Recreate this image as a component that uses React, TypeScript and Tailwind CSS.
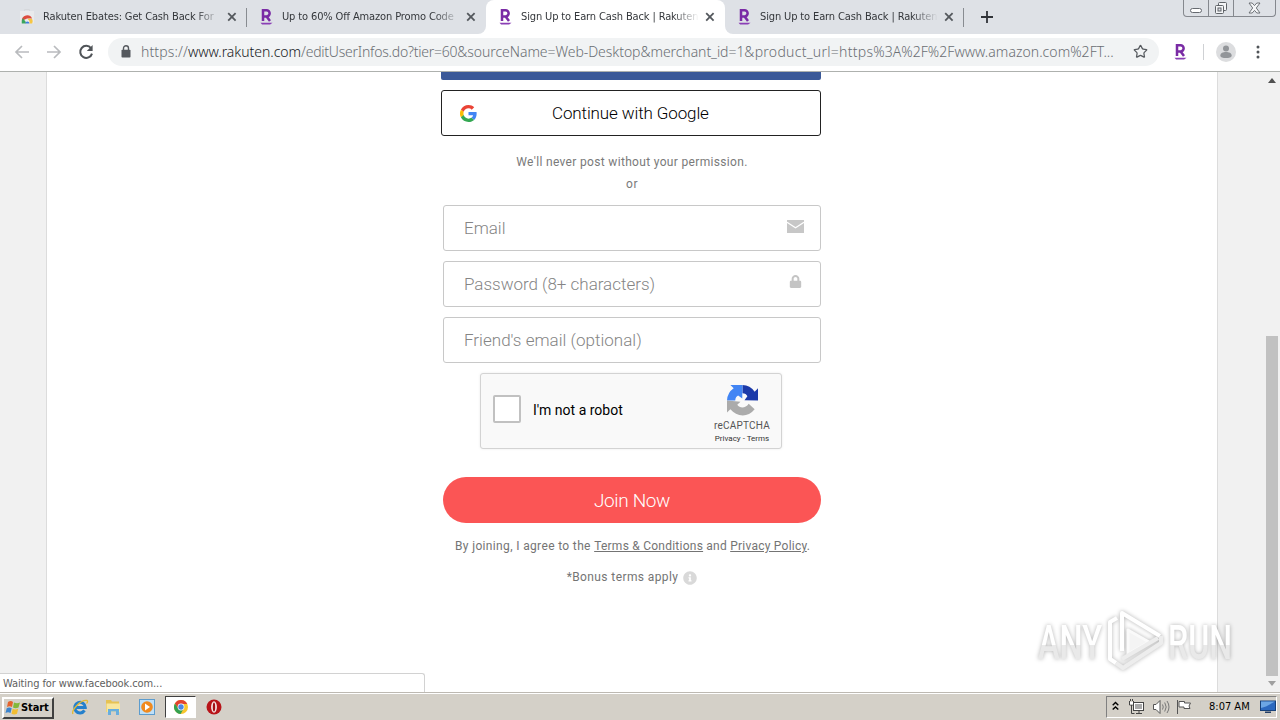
import type { ReactNode } from "react";
import { FaLock, FaInfoCircle } from "react-icons/fa";
import { Star } from "lucide-react";

interface Tab {
  title: string;
  icon: "store" | "rakuten";
  active?: boolean;
}

const tabs: Tab[] = [
  { title: "Rakuten Ebates: Get Cash Back For", icon: "store" },
  { title: "Up to 60% Off Amazon Promo Code", icon: "rakuten" },
  { title: "Sign Up to Earn Cash Back | Rakuten", icon: "rakuten", active: true },
  { title: "Sign Up to Earn Cash Back | Rakuten", icon: "rakuten" },
];

function RakutenIcon() {
  return (
    <svg width="16" height="18" viewBox="0 0 16 18" fill="none" className="shrink-0">
      <path d="M5 13V2.3h3.6a3 3 0 0 1 0 6.1H5M8.6 8.4l3.4 4.6" stroke="#7a2ba5" strokeWidth="2.5" />
      <path d="M2.5 14.7h12l-2.4 1.7H4.1z" fill="#8a3fb5" />
    </svg>
  );
}

function StoreIcon() {
  return (
    <svg width="16" height="18" viewBox="0 0 16 18" fill="none" className="shrink-0">
      <path d="M1 3h14v11.5a1 1 0 0 1-1 1H2a1 1 0 0 1-1-1z" fill="#e9eaec" />
      <path d="M5.5 3V1.5h5V3" stroke="#d6d8dc" />
      <path d="M2.8 13a5.4 5.4 0 0 1 10.3-2.5H8z" fill="#dd4b3e" />
      <path d="M2.8 15.5c-.4-2.4.2-4 1.2-5.2L6.8 14v1.5z" fill="#3ba55d" />
      <path d="M13.2 15.5a5 5 0 0 0-.2-4.8H8.5l2 2.4v2.4z" fill="#f6c643" />
      <path d="M6.4 15.5a2 2 0 1 1 4 0z" fill="#3c7de0" />
    </svg>
  );
}

function CloseIcon() {
  return (
    <svg width="10" height="10" viewBox="0 0 10 10" className="shrink-0">
      <path d="M1.2 1.2l7.4 7.4M8.6 1.2L1.2 8.6" stroke="#54585d" strokeWidth="1.8" />
    </svg>
  );
}

function TabStrip() {
  return (
    <div className="relative flex h-[34px] bg-[#dee1e6]">
      <div className="flex pl-2">
        {tabs.map((tab, i) => (
          <div
            key={i}
            className={[
              "relative flex h-[34px] w-[239px] items-center pl-[11px]",
              tab.active ? "rounded-t-lg bg-white" : "",
            ].join(" ")}
          >
            {tab.icon === "store" ? <StoreIcon /> : <RakutenIcon />}
            <span className="ml-2 w-[178px] whitespace-nowrap font-['DejaVu_Sans_Condensed','DejaVu_Sans',sans-serif] text-[11px] tracking-[-0.13px] text-[#34373b] [font-stretch:condensed] [mask-image:linear-gradient(to_right,black_152px,transparent_178px)]">
              {tab.title}
            </span>
            <span className="ml-[6px] flex">
              <CloseIcon />
            </span>
            {(i === 0 || i === 3) && <span className="absolute right-0 top-2 h-[19px] w-px bg-[#888c91]" />}
            {tab.active && (
              <>
                <span className="absolute -left-2 bottom-0 size-2 bg-white">
                  <span className="block size-2 rounded-br-lg bg-[#dee1e6]" />
                </span>
                <span className="absolute -right-2 bottom-0 size-2 bg-white">
                  <span className="block size-2 rounded-bl-lg bg-[#dee1e6]" />
                </span>
              </>
            )}
          </div>
        ))}
      </div>
      <svg width="14" height="14" viewBox="0 0 14 14" className="ml-4 mt-[10px]">
        <path d="M7 1v12M1 7h12" stroke="#303338" strokeWidth="1.8" />
      </svg>
      <div className="absolute right-[4px] top-0 flex h-[17px] w-[93px] rounded-b border border-t-0 border-[#85888e]">
        <div className="flex w-[25px] items-end justify-center border-r border-[#85888e] pb-[3px]">
          <span className="h-[5px] w-[12px] rounded-sm border border-[#666a70] bg-white" />
        </div>
        <div className="flex w-[25px] items-center justify-center border-r border-[#85888e]">
          <svg width="14" height="14" viewBox="0 0 14 14" fill="#f4f5f7" stroke="#5f6368">
            <rect x="4.5" y="1.5" width="8" height="8" rx="1" />
            <rect x="1.5" y="4.5" width="8" height="8" rx="1" />
            <rect x="4" y="7" width="3" height="3" fill="#dee1e6" />
          </svg>
        </div>
        <div className="flex flex-1 items-center justify-center">
          <svg width="13" height="12" viewBox="0 0 13 12" fill="#f4f5f7" stroke="#62666b" strokeWidth="0.9">
            <path d="M1 1h3.2l2.3 2.6L8.8 1H12L8.3 6l3.7 5H8.8L6.5 8.4 4.2 11H1l3.7-5z" />
          </svg>
        </div>
      </div>
    </div>
  );
}

function Toolbar() {
  return (
    <div className="flex h-[38px] items-center border-b border-[#aeb1ae] bg-white pl-[14px]">
      <svg width="16" height="16" viewBox="0 0 16 16" fill="none" stroke="#b9bbbe" strokeWidth="1.7" className="mb-[2px]">
        <path d="M15 8H2.2M8 2L2 8l6 6" />
      </svg>
      <svg width="16" height="16" viewBox="0 0 16 16" fill="none" stroke="#b9bbbe" strokeWidth="1.7" className="mb-[2px] ml-4">
        <path d="M1 8h12.8M8 2l6 6-6 6" />
      </svg>
      <svg width="16" height="16" viewBox="0 0 16 16" fill="none" className="mb-[2px] ml-4">
        <path d="M13 4.2A6 6 0 1 0 14 9.6" stroke="#505458" strokeWidth="2" />
        <path d="M14.6 1v6H8.8z" fill="#505458" />
      </svg>
      <div className="mb-[2px] ml-[14px] flex h-7 w-[1051px] items-center rounded-full bg-[#f1f3f4] pl-[13px]">
        <svg width="10" height="13" viewBox="0 0 10 13">
          <path d="M2.5 5V3.2a2.5 2.5 0 0 1 5 0V5" fill="none" stroke="#55595e" strokeWidth="1.4" />
          <rect x="0.5" y="4.7" width="9" height="7.8" rx="0.8" fill="#55595e" />
        </svg>
        <div className="ml-[10px] w-[992px] whitespace-nowrap font-['Noto_Sans',sans-serif] text-[14px] font-light tracking-[-0.015px] text-[#6a6e73]">
          <span className="tracking-[0.13px]">https://</span>
          <span className="tracking-[-0.03px] text-[#17191c]">www.rakuten.com</span>
          <span className="tracking-[-0.23px]">/editUserInfos.do?tier=60</span>
          <span className="tracking-[-0.05px]">&amp;sourceName=Web-Desktop&amp;merchant_id=1</span>
          <span className="tracking-[0.28px]">&amp;product_url=https</span>
          <span className="tracking-[0.04px]">%3A%2F%2Fwww.amazon.com%2FT...</span>
        </div>
        <Star size={15} strokeWidth={2} className="text-[#55595e]" />
      </div>
      <span className="mb-[2px] ml-[13px] flex">
        <RakutenIcon />
      </span>
      <span className="mb-[2px] ml-[15px] h-4 w-px bg-[#cfd1d4]" />
      <svg width="20" height="20" viewBox="0 0 20 20" className="mb-[2px] ml-3">
        <circle cx="10" cy="10" r="10" fill="#dcdddf" />
        <circle cx="10" cy="6.5" r="3" fill="#929599" />
        <path d="M4.3 13.4c0-4.6 11.4-4.6 11.4 0 0 3.6-11.4 3.6-11.4 0z" fill="#929599" />
      </svg>
      <svg width="4" height="16" viewBox="0 0 4 16" fill="#505458" className="mb-px ml-[20px]">
        <circle cx="2" cy="3" r="1.5" />
        <circle cx="2" cy="8" r="1.5" />
        <circle cx="2" cy="13" r="1.5" />
      </svg>
    </div>
  );
}

function GoogleIcon() {
  return (
    <svg width="17" height="17" viewBox="0 0 48 48">
      <path fill="#EA4335" d="M24 9.5c3.54 0 6.71 1.22 9.21 3.6l6.85-6.85C35.9 2.38 30.47 0 24 0 14.62 0 6.51 5.38 2.56 13.22l7.98 6.19C12.43 13.72 17.74 9.5 24 9.5z" />
      <path fill="#4285F4" d="M46.98 24.55c0-1.57-.15-3.09-.38-4.55H24v9.02h12.94c-.58 2.96-2.26 5.48-4.78 7.18l7.73 6c4.51-4.18 7.09-10.36 7.09-17.65z" />
      <path fill="#FBBC05" d="M10.53 28.59a14.5 14.5 0 0 1 0-9.18l-7.98-6.19a24 24 0 0 0 0 21.56l7.98-6.19z" />
      <path fill="#34A853" d="M24 48c6.48 0 11.93-2.13 15.89-5.81l-7.73-6c-2.15 1.45-4.92 2.3-8.16 2.3-6.26 0-11.57-4.22-13.47-9.91l-7.98 6.19C6.51 42.62 14.62 48 24 48z" />
    </svg>
  );
}

function Field({ label, icon }: { label: ReactNode; icon?: ReactNode }) {
  return (
    <div className="flex h-[46px] items-center justify-between rounded-[3px] border border-[#c8c8c8] pl-5 pr-4">
      {label}
      {icon}
    </div>
  );
}

function Recaptcha() {
  return (
    <div className="ml-[37px] mt-[10px] flex h-[76px] w-[302px] rounded-[3px] border border-[#d3d3d3] bg-[#f9f9f9] font-normal shadow-[0_0_3px_rgba(0,0,0,0.08)]">
      <span className="ml-3 mt-[21px] size-7 rounded-[2px] border-2 border-[#c1c1c1] bg-white" />
      <span className="ml-3 mt-[26px] w-[179px] whitespace-nowrap text-[14px] leading-5 text-black">
        I'm not a robot
      </span>
      <div className="flex w-[60px] flex-col items-center pt-[11px] text-[#555]">
        <svg width="31" height="31" viewBox="0 0 64 64">
          <path fill="#1c3aa9" d="M64 31.95V6.9l-6.9 6.9A32 32 0 0 0 31.9 0v17c5.1.1 8.400 2.700 10.200 6l-6 8.500z" />
          <path fill="#4285f4" d="M31.86 0H7l6.8 6.9A32 32 0 0 0 0 32h17c.1-5.2 2.7-8.500 6-10.200l8.500 6z" />
          <path fill="#ababab" d="M0 32v25l6.9-6.9c12.6 15.4 35.9 18.2 50.2 0L44.800 38.800c-6.9 10.200-18.400 9.600-23.600 2.200l6.600-6.600z" />
        </svg>
        <span className="mt-[4px] text-[10px] leading-3 tracking-[0.2px]">reCAPTCHA</span>
        <span className="mt-[2px] whitespace-nowrap text-[8px] leading-[10px] text-[#333]">Privacy - Terms</span>
      </div>
    </div>
  );
}

function SignUpForm() {
  return (
    <div className="ml-[394px] w-[380px] font-[Roboto,sans-serif] font-light">
      <div className="h-2 rounded-b-[2px] bg-[#3b5998]" />
      <button className="mt-[10px] flex h-[46px] w-full items-center rounded-[3px] border border-[#222] pl-[18px]">
        <GoogleIcon />
        <span className="ml-[75px] whitespace-nowrap pt-[2px] text-[17px] tracking-[-0.12px] text-black">
          Continue with Google
        </span>
      </button>
      <p className="ml-[2px] mt-[17px] text-center text-[12px] leading-[18px] tracking-[0.33px] text-[#7a7a7a] font-normal">
        We'll never post without your permission.
      </p>
      <p className="ml-[2px] mt-[4px] text-center text-[12px] leading-[18px] tracking-[0.5px] text-[#7a7a7a] font-normal">
        or
      </p>
      <div className="ml-[2px] mt-3 flex flex-col gap-[10px] text-[17px] text-[#858585]">
        <Field
          label={<span className="pt-[2px]">Email</span>}
          icon={
            <svg width="17" height="13" viewBox="0 0 17 13" className="mb-[3px]">
              <path d="M0 0h17v13H0z" fill="#c7c7c7" />
              <path d="M0 2.2l8.5 5.6L17 2.2" fill="none" stroke="white" strokeWidth="1.2" />
            </svg>
          }
        />
        <Field
          label={<span className="pt-[2px] tracking-[-0.02px]">Password (8+ characters)</span>}
          icon={<FaLock size={13} className="mb-[5px] mr-[2px] text-[#c4c4c4]" />}
        />
        <Field label={<span className="pt-[2px] tracking-[0.02px]">Friend's email (optional)</span>} />
      </div>
      <div className="ml-[2px]">
        <Recaptcha />
      </div>
      <button className="ml-[2px] mt-7 flex h-[46px] w-[378px] items-center justify-center rounded-full bg-[#fb5555] pt-[2px] text-[19px] tracking-[-0.35px] text-white">
        Join Now
      </button>
      <p className="ml-[2px] mt-[14px] whitespace-nowrap pl-3 text-[12px] leading-[18px] tracking-[0.24px] text-[#747474] font-normal">
        <span className="tracking-[0.35px]">By joining, I agree to the </span>
        <a className="underline">Terms &amp; Conditions</a> and <a className="underline">Privacy Policy</a>.
      </p>
      <p className="ml-[2px] mt-[13px] flex items-center justify-center text-[12px] leading-[18px] tracking-[0.4px] text-[#747474] font-normal">
        *Bonus terms apply
        <FaInfoCircle size={14} className="ml-[5px] mt-[2px] text-[#d9d9d9]" />
      </p>
    </div>
  );
}

function Watermark() {
  return (
    <svg
      width="210"
      height="72"
      viewBox="0 0 210 72"
      className="absolute left-[1030px] top-[533px] drop-shadow-[0_0_2px_rgba(0,0,0,0.3)]"
    >
      <defs>
        <linearGradient id="fade" x1="0" y1="0" x2="0" y2="1">
          <stop offset="0.55" stopColor="#ffffff" />
          <stop offset="0.55" stopColor="#e9e9e9" />
        </linearGradient>
      </defs>
      <g fill="url(#fade)" fontFamily="Roboto, sans-serif" fontSize="49" fontWeight="500">
        <text x="8" y="54" textLength="64" lengthAdjust="spacingAndGlyphs">ANY</text>
        <text x="138" y="54" textLength="64" lengthAdjust="spacingAndGlyphs">RUN</text>
      </g>
      <g fill="none" strokeWidth="4" strokeLinejoin="round">
        <path d="M87 13l-7 4v37l6 4" stroke="#fff" />
        <path d="M92 46V8l38 23" stroke="#fff" />
        <path d="M98 25v24l21-12z" fill="#f4f4f4" stroke="#fafafa" strokeWidth="3" />
        <path d="M131 31v7L93 63l-7-5M92 54l36-21" stroke="#ededed" />
      </g>
    </svg>
  );
}

function Page() {
  return (
    <div className="relative flex h-[620px] overflow-hidden bg-[#f1f1f1]">
      <div className="ml-[46px] w-[1172px] border-x border-[#dcdcdc] bg-white">
        <SignUpForm />
      </div>
      <div className="ml-auto flex w-[14px] flex-col items-center bg-[#f1f1f1] pr-[2px] pt-[6px]">
        <svg width="8" height="5" viewBox="0 0 8 5" fill="#505050">
          <path d="M0 5l4-5 4 5z" />
        </svg>
        <span className="mt-[253px] h-[340px] w-[12px] bg-[#c1c1c1]" />
        <svg width="8" height="5" viewBox="0 0 8 5" fill="#a0a0a0" className="mt-[5px]">
          <path d="M0 0l4 5 4-5z" />
        </svg>
      </div>
      <Watermark />
      <div className="absolute bottom-0 left-0 h-[19px] w-[425px] rounded-tr-[3px] border-r border-t border-[#d2d2d2] bg-white pl-[3px] pt-px font-['DejaVu_Sans_Condensed','DejaVu_Sans',sans-serif] text-[11px] leading-[18px] tracking-[-0.1px] text-[#606060] [font-stretch:condensed]">
        Waiting for www.facebook.com...
      </div>
    </div>
  );
}

function ChromeIcon() {
  return (
    <svg width="16" height="16" viewBox="0 0 16 16">
      <circle cx="8" cy="8" r="7" fill="#f8c62e" />
      <path d="M1.9 4.5A7 7 0 0 1 14.2 5H8L5.3 9.6z" fill="#e2432f" />
      <path d="M1.9 4.5A7 7 0 0 0 7.6 15l3-5.3H5.4z" fill="#34a150" />
      <circle cx="8" cy="8" r="3.4" fill="white" />
      <circle cx="8" cy="8" r="2.7" fill="#4a86e4" />
    </svg>
  );
}

function Taskbar() {
  return (
    <div className="flex h-7 items-center border-t border-[#bdb9b2] bg-[#d4d0c8] shadow-[inset_0_1px_0_white]">
      <button className="ml-[2px] mt-[2px] flex h-[22px] w-[52px] items-center border-2 border-b-[#404040] border-l-white border-r-[#404040] border-t-white pl-px font-['DejaVu_Sans_Condensed','DejaVu_Sans',sans-serif] text-[11px] font-bold tracking-[-0.1px] text-black [font-stretch:condensed]">
        <svg width="16" height="16" viewBox="0 0 16 16" className="shrink-0">
          <path d="M3 2q3-1.8 5 0L7 7Q4.5 5.6 2 7z" fill="#e5632c" />
          <path d="M9 2.5q3 1.5 6 0L13.5 7.5q-3 1.5-5.5 0z" fill="#83b83a" />
          <path d="M1.7 8.2q2.5-1.4 5 0L5.5 13Q3 11.5.5 13z" fill="#3b84ce" />
          <path d="M7.7 8.7q2.5 1.5 5.5 0L12 13.7q-3 1.5-5.5 0z" fill="#f2bd31" />
        </svg>
        <span className="pt-px">Start</span>
      </button>
      <svg width="18" height="18" viewBox="0 0 18 18" fill="none" className="ml-[17px]">
        <path d="M13.5 12.4A5.3 5.3 0 1 1 14.3 9.5H5" stroke="#2480cc" strokeWidth="3" />
        <path d="M2 16C0 13 9 1.5 16 2.5c1 .5.5 2-.5 3" stroke="#e2ba36" strokeWidth="1.3" />
      </svg>
      <svg width="18" height="18" viewBox="0 0 18 18" className="ml-[15px]">
        <path d="M2 2h5l1 1.5h7V14H2z" fill="#e6c254" />
        <path d="M2.5 5.5H16V14H2.5z" fill="#f8e69e" />
        <path d="M4 17v-6h11v6h-3v-3.5H7V17z" fill="#68aede" />
      </svg>
      <svg width="18" height="18" viewBox="0 0 18 18" className="ml-4">
        <rect x="1.5" y="1.5" width="15" height="15" fill="#bfe0f8" stroke="#5c9cce" />
        <circle cx="9" cy="9" r="5.8" fill="#f08a1f" />
        <path d="M7 5.5v7l5-3.5z" fill="white" />
      </svg>
      <div className="ml-[9px] mt-px flex h-[22px] w-[31px] items-center justify-center border border-b-white border-l-[#404040] border-r-white border-t-[#404040] bg-white">
        <ChromeIcon />
      </div>
      <svg width="16" height="16" viewBox="0 0 16 16" className="ml-[10px]">
        <circle cx="8" cy="8" r="7.5" fill="#b81419" />
        <ellipse cx="8" cy="8" rx="2.9" ry="5.8" fill="#f7eaea" />
        <ellipse cx="8" cy="8" rx="1.2" ry="4.6" fill="#a31015" />
      </svg>
      <div className="ml-auto mr-[3px] mt-px flex h-[22px] w-[171px] items-center border border-b-white border-l-[#808080] border-r-white border-t-[#808080]">
        <svg width="7" height="10" viewBox="0 0 7 10" fill="none" stroke="black" strokeWidth="1.4" className="mb-[2px] ml-[5px]">
          <path d="M.7 4.2l2.8-2.7 2.8 2.7M.7 8.6l2.8-2.7 2.8 2.7" />
        </svg>
        <svg width="17" height="16" viewBox="0 0 17 16" fill="none" className="ml-[9px]">
          <rect x="5.5" y="3.5" width="10" height="8" fill="#a9a9a9" stroke="#444" />
          <rect x="6.5" y="4.5" width="8" height="6" stroke="white" />
          <path d="M8 14.5h6M11 12v2" stroke="#444" />
          <path d="M1.5 2v4h4V2M3.5 6v8.5h3M2.5 0v2m2-2v2" stroke="#444" />
          <path d="M2 3h3v2.5H2z" fill="white" />
        </svg>
        <svg width="18" height="16" viewBox="0 0 18 16" fill="none" className="ml-[7px]">
          <path d="M1.5 5.5H4l4-4v13l-4-4H1.5z" fill="white" stroke="#555" />
          <path d="M10.5 5.5q1.5 2.5 0 5M12.7 3.5q3 4.5 0 9M15 2q4 6 0 12" stroke="#777" />
        </svg>
        <svg width="18" height="16" viewBox="0 0 18 16" fill="none" className="ml-[5px]">
          <path d="M2.5 1v14M4 2.5h5.5V4h6L14 7l1 2.5H9V8H4z" fill="white" stroke="#555" />
        </svg>
        <span className="ml-4 whitespace-nowrap pt-px font-['DejaVu_Sans_Condensed','DejaVu_Sans',sans-serif] text-[11px] text-black [font-stretch:condensed]">
          8:07 AM
        </span>
        <svg width="16" height="14" viewBox="0 0 16 14" className="ml-auto">
          <rect x="0.5" y="1" width="15" height="9.5" fill="#2c69bf" stroke="#174179" />
          <path d="M1 1.5h14L6 6.5 1 8z" fill="#6ca6e4" />
          <path d="M5 13h6v-1.5H5z" fill="#243e66" />
        </svg>
      </div>
    </div>
  );
}

export default function App() {
  return (
    <div className="flex h-[720px] w-[1280px] flex-col overflow-hidden bg-white">
      <TabStrip />
      <Toolbar />
      <Page />
      <Taskbar />
    </div>
  );
}
